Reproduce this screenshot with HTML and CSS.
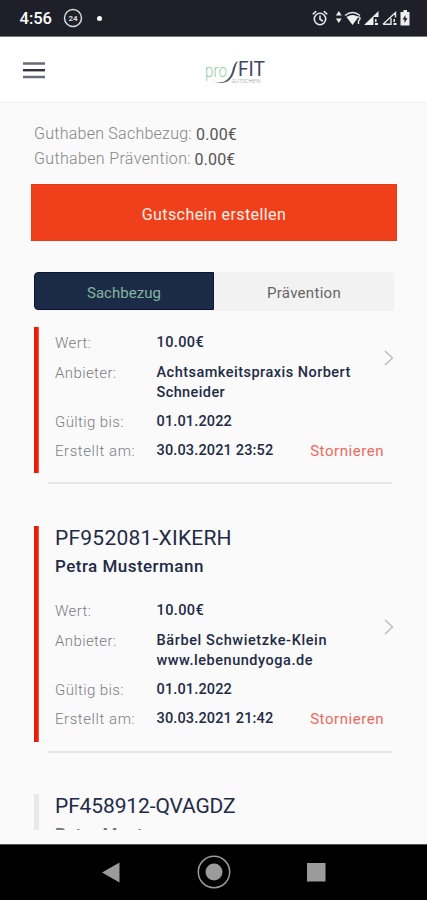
FILE: index.html
```html
<!DOCTYPE html>
<html lang="de">
<head>
<meta charset="utf-8">
<meta name="viewport" content="width=device-width, initial-scale=1">
<title>proFIT Gutschein</title>
<link rel="stylesheet" href="styles.css">
</head>
<body>
<div class="screen">
  <div class="status">
    <span class="clock">4:56</span>
    <svg class="badge24" width="20" height="20" viewBox="0 0 20 20"><circle cx="10" cy="10" r="8.5" fill="none" stroke="#d8d8dc" stroke-width="1.5"/><text x="10" y="13" text-anchor="middle" class="badge-text">24</text></svg>
    <span class="dot"></span>
    <svg class="indicators" width="100" height="20" viewBox="0 0 100 20">
      <g fill="none" stroke="#e8e8ea" stroke-width="1.6" stroke-linecap="round"><circle cx="8" cy="11" r="5.7"/><path d="M8 8v3.3l2.4 1.5M1.2 5.8l2.6-2.1M14.8 5.8l-2.6-2.1"/></g>
      <g fill="#eeeef0"><path d="M26.800 3l2.900 4.500h-5.800zM26.800 15l2.900-4.500h-5.800z"/><path d="M34.500 9q6-4 12 0L40.500 17z"/><path d="M52 17L66.500 3v6h-5v8zM63 11h1.500v3H63zM63 15h3v2h-3z"/><path d="M81.500 11h1.500v3h-1.500zM81.500 15h3v2h-3z"/><path fill-rule="evenodd" d="M88.500 4h3V2h3.500v2h2.500v13.500h-9zM93.500 7l-3 4.500h2V15l3-4.800h-2z"/></g>
      <path d="M33 7.500q7.500-6 15 0M45.500 9q3-.5 2.500 2l-1.500 2v3M71 16.300L83.500 4.500v5M71 16.300h8v-6" fill="none" stroke="#e8e8ea" stroke-width="1.400"/>
    </svg>
  </div>
  <header class="header">
    <svg class="menu" width="22" height="17" viewBox="0 0 22 17"><path d="M0 1.500h22M0 15h22" stroke="#696b78" stroke-width="2.600"/><path d="M0 8.200h22" stroke="#30323e" stroke-width="2.400"/></svg>
    <svg class="logo" width="64" height="30" viewBox="0 0 64 30">
      <text x="1" y="19" textLength="22" lengthAdjust="spacingAndGlyphs" class="logo-pro">pro</text>
      <text x="34" y="18" textLength="27" lengthAdjust="spacingAndGlyphs" class="logo-fit">FIT</text>
      <text x="27.500" y="25" textLength="29" lengthAdjust="spacingAndGlyphs" class="logo-sub">GUTSCHEIN</text>
      <path d="M7 22.500C18 27 25 23 28 14Q30 4 34 3Q32 6 30.500 13C27 26 17 27 7 22.500Z" fill="#4b5566"/>
    </svg>
  </header>
  <main class="content">
    <div class="balances">
      <div class="balance"><span class="bal-a">Guthaben Sachbezug:</span><span class="amount">0.00€</span></div>
      <div class="balance"><span class="bal-b">Guthaben Prävention:</span><span class="amount">0.00€</span></div>
    </div>
    <div class="create">Gutschein erstellen</div>
    <div class="tabs"><div class="tab active">Sachbezug</div><div class="tab">Prävention</div></div>
    <section class="card first">
      <div class="bar"></div>
      <div class="details">
        <div class="row wert"><span class="label">Wert:</span><span class="value money">10.00€</span></div>
        <div class="row provider"><span class="label">Anbieter:</span><span class="value"><span class="practice">Achtsamkeitspraxis Norbert</span><br>Schneider</span></div>
        <div class="row"><span class="label">Gültig bis:</span><span class="value date">01.01.2022</span></div>
        <div class="row"><span class="label ers">Erstellt am:</span><span class="value stamp">30.03.2021 23:52</span><span class="cancel">Stornieren</span></div>
      </div>
      <svg class="chevron" width="12" height="18" viewBox="0 0 12 18"><path d="M2 2l7.500 7L2 16" fill="none" stroke="#b9b9be" stroke-width="1.300"/></svg>
    </section>
    <hr class="rule">
    <section class="card second">
      <div class="bar"></div>
      <div class="details">
        <div class="code">PF952081-XIKERH</div>
        <div class="name">Petra Mustermann</div>
        <div class="row wert"><span class="label">Wert:</span><span class="value money">10.00€</span></div>
        <div class="row provider"><span class="label">Anbieter:</span><span class="value"><span class="who">Bärbel Schwietzke-Klein</span><br><span class="site">www.lebenundyoga.de</span></span></div>
        <div class="row"><span class="label">Gültig bis:</span><span class="value date">01.01.2022</span></div>
        <div class="row"><span class="label ers">Erstellt am:</span><span class="value stamp">30.03.2021 21:42</span><span class="cancel">Stornieren</span></div>
      </div>
      <svg class="chevron" width="12" height="18" viewBox="0 0 12 18"><path d="M2 2l7.500 7L2 16" fill="none" stroke="#b9b9be" stroke-width="1.300"/></svg>
    </section>
    <hr class="rule">
    <section class="card third">
      <div class="bar"></div>
      <div class="details"><div class="code last">PF458912-QVAGDZ</div><div class="name">Petra Mustermann</div></div>
    </section>
  </main>
  <nav class="nav">
    <svg width="427" height="56" viewBox="0 0 427 56" fill="#9b9b9b"><path d="M102 27.500l17.500-10v20z"/><circle cx="214" cy="27" r="8.500"/><circle cx="214" cy="27" r="15.700" fill="none" stroke="#9b9b9b" stroke-width="1.500"/><rect x="307" y="18" width="18.500" height="18.500"/></svg>
  </nav>
</div>
</body>
</html>
```
FILE: styles.css
```css
* { box-sizing: border-box; }
body { margin: 0; font-family: Roboto, sans-serif; background: #fafafa; }
.screen { width: 427px; height: 900px; display: flex; flex-direction: column; overflow: hidden; }
.status { height: 37px; flex: none; display: flex; align-items: center; background: #1e1f29; border-bottom: 1px solid #777780; padding-left: 19.500px; }
.clock { width: 43.500px; color: #fff; font-size: 16.500px; font-weight: 500; line-height: 20px; padding-top: 2px; }
.badge-text { font: 700 8px Roboto, sans-serif; fill: #d8d8dc; }
.dot { width: 5px; height: 5px; border-radius: 50%; background: #fff; margin-left: 14px; }
.indicators { margin-left: 209.500px; }
.header { height: 66px; flex: none; background: #fff; border-bottom: 1px solid #f1f1f1; display: flex; align-items: flex-start; padding-left: 23px; }
.menu { margin-top: 25px; }
.logo { margin: 21px 0 0 159px; }
.logo-pro { font: 300 18px Roboto, sans-serif; fill: #94cfac; }
.logo-fit { font: 400 21px Roboto, sans-serif; fill: #3e4665; }
.logo-sub { font: 300 5px Roboto, sans-serif; fill: #8f949e; }
.content { height: 727px; flex: none; overflow: hidden; padding: 18px 30px 0 31px; }
.balances { padding-left: 3px; height: 63px; }
.balance { display: flex; height: 25px; line-height: 25px; color: #858585; font-size: 16px; font-weight: 300; }
.balance > span:first-child { width: 162px; white-space: nowrap; }
.balance:nth-child(2) > span:first-child { width: 160.500px; }
.bal-a { letter-spacing: 0.250px; }
.bal-b { letter-spacing: 0.350px; }
.amount { color: #555; font-weight: 400; line-height: 27px; letter-spacing: 0.150px; }
.create { height: 57px; background: #f0401b; border: 1px solid #e93b13; color: #fff1e9; text-align: center; font-size: 16px; letter-spacing: 0.420px; line-height: 59px; }
.tabs { display: flex; margin: 31px 3px 0; height: 39px; border-radius: 4px; overflow: hidden; background: #f2f2f2; }
.tab { width: 180px; text-align: center; line-height: 42px; font-size: 15px; letter-spacing: 0.300px; color: #666; }
.tab.active { height: 38px; background: #1c2b45; border: 1px solid #0c1537; color: #83b4a0; border-radius: 4px 0 0 4px; line-height: 40px; letter-spacing: 0.050px; }
.card { display: flex; position: relative; margin-left: 3px; }
.bar { width: 5px; background: linear-gradient(90deg, #e51b0b 65%, #ff6a41); }
.details { width: 345px; padding-left: 16px; color: #222a47; }
.first { margin-top: 16px; height: 146px; }
.first .details { padding-top: 6px; }
.row { display: flex; font-size: 15px; line-height: 20px; margin-bottom: 9.300px; white-space: nowrap; }
.row.wert { margin-bottom: 10.300px; }
.row.provider { margin-bottom: 8.300px; }
.label { width: 101.500px; font-weight: 300; color: #7c7c84; letter-spacing: 0.400px; }
.ers { letter-spacing: 0.560px; }
.value { font-weight: 500; font-size: 14.500px; letter-spacing: 0.400px; }
.practice { letter-spacing: 0.480px; }
.who { letter-spacing: 0.610px; }
.site { letter-spacing: 0.530px; }
.date { letter-spacing: 0.150px; }
.stamp { letter-spacing: 0.150px; }
.cancel { margin-left: auto; letter-spacing: 0.550px; color: #f0685c; }
.chevron { position: absolute; left: 349px; top: 22px; }
.rule { height: 2px; margin: 9px 5px 0 17px; border: 0; background: #e6e6e8; }
.second { margin-top: 42px; height: 216px; }
.code { font-size: 21px; line-height: 24px; letter-spacing: 0.230px; }
.code.last { letter-spacing: -0.120px; }
.name { font-size: 17px; font-weight: 500; line-height: 22px; margin: 5px 0 24px; letter-spacing: 0.470px; }
.second .chevron { top: 92px; }
.third { margin-top: 41px; height: 36px; overflow: hidden; }
.third .bar { background: #e8e8ea; }
.third .name { margin: 5px 0 0; color: #70737f; }
.nav { height: 57px; flex: none; margin-top: 14px; background: #000; border-top: 1px solid #555; }
.nav svg { display: block; }
```
